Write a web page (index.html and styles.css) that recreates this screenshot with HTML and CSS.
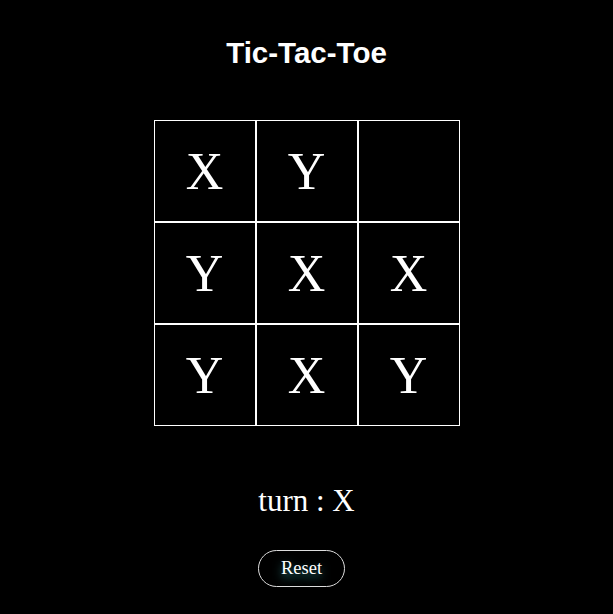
FILE: index.html
```html
<!DOCTYPE html>
<html>
<head>
<meta charset="utf-8">
<link rel="stylesheet" href="styles.css">
</head>
<body>
<main class="game">
  <h1 class="title">Tic-Tac-Toe</h1>
  <div class="board">
    <div class="cell">X</div>
    <div class="cell">Y</div>
    <div class="cell"></div>
    <div class="cell">Y</div>
    <div class="cell">X</div>
    <div class="cell">X</div>
    <div class="cell">Y</div>
    <div class="cell">X</div>
    <div class="cell">Y</div>
  </div>
  <p class="turn">turn : X</p>
  <button class="reset">Reset</button>
</main>
</body>
</html>
```
FILE: styles.css
```css
html, body {
  margin: 0;
  padding: 0;
  background: #000;
  color: #fff;
}
body {
  width: 613px;
  height: 614px;
  overflow: hidden;
}
.game {
  display: flex;
  flex-direction: column;
  align-items: center;
}
.title {
  margin: 36px 0 0;
  font-family: "Liberation Sans", Arial, sans-serif;
  font-weight: bold;
  font-size: 29.5px;
  line-height: 34px;
}
.board {
  margin-top: 50px;
  display: grid;
  grid-template-columns: repeat(3, 102px);
  grid-template-rows: repeat(3, 102px);
}
.cell {
  box-sizing: border-box;
  border: 1px solid #fff;
  display: flex;
  align-items: center;
  justify-content: center;
  font-family: "Liberation Serif", "Times New Roman", serif;
  font-size: 52px;
}
.turn {
  margin: 58px 0 0;
  font-family: "Liberation Serif", "Times New Roman", serif;
  font-size: 31px;
  line-height: 34px;
}
.reset {
  margin: 32px 10px 0 0;
  box-sizing: border-box;
  width: 87px;
  height: 37px;
  border: 1px solid #ddd;
  border-radius: 19px;
  background: #000;
  color: #fff;
  font-family: "Liberation Serif", "Times New Roman", serif;
  font-size: 18.5px;
  padding: 0;
  text-shadow: 0 4px 10px rgba(60, 160, 160, 0.85);
}
```
